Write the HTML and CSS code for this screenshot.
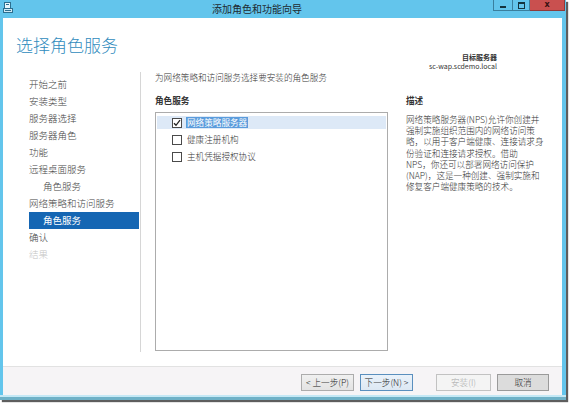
FILE: index.html
```html
<!DOCTYPE html>
<html lang="zh-CN">
<head>
<meta charset="utf-8">
<title>添加角色和功能向导</title>
<link rel="stylesheet" href="styles.css">
</head>
<body>
<div class="window">
  <div class="titlebar">
    <svg class="appicon" width="10" height="11" viewBox="0 0 10 11">
      <rect x="1.5" y="0.5" width="6" height="6" fill="#e8f6fc" stroke="#2d6f8f" stroke-width="1"/>
      <rect x="3" y="2" width="3" height="1" fill="#2d6f8f"/>
      <rect x="0.5" y="6.5" width="9" height="4" fill="#cfe9f5" stroke="#2d6f8f" stroke-width="1"/>
      <rect x="2" y="8" width="6" height="1" fill="#2d6f8f"/>
    </svg>
    <div class="title">添加角色和功能向导</div>
    <div class="caption">
      <div class="cbtn min"><span class="minbar"></span></div>
      <div class="cbtn max"><span class="maxbox"></span></div>
      <div class="cbtn close">x</div>
    </div>
  </div>
  <div class="client">
    <div class="header">
      <h1 class="heading">选择角色服务</h1>
      <div class="target">
        <div class="target-label">目标服务器</div>
        <div class="target-name">sc-wap.scdemo.local</div>
      </div>
    </div>
    <div class="main">
      <nav class="nav">
        <div class="nav-item">开始之前</div>
        <div class="nav-item">安装类型</div>
        <div class="nav-item">服务器选择</div>
        <div class="nav-item">服务器角色</div>
        <div class="nav-item">功能</div>
        <div class="nav-item">远程桌面服务</div>
        <div class="nav-item sub">角色服务</div>
        <div class="nav-item">网络策略和访问服务</div>
        <div class="nav-item sub active">角色服务</div>
        <div class="nav-item">确认</div>
        <div class="nav-item disabled">结果</div>
      </nav>
      <div class="separator"></div>
      <div class="content">
        <p class="intro">为网络策略和访问服务选择要安装的角色服务</p>
        <div class="cols">
          <div class="roles">
            <div class="label">角色服务</div>
            <div class="listbox">
              <div class="row selected">
                <span class="check checked"><svg width="8" height="8" viewBox="0 0 8 8"><path d="M1 4.2 L3 6.3 L7 1.2" fill="none" stroke="#222" stroke-width="1.3"/></svg></span>
                <span class="row-text hl">网络策略服务器</span>
              </div>
              <div class="row">
                <span class="check"></span>
                <span class="row-text">健康注册机构</span>
              </div>
              <div class="row">
                <span class="check"></span>
                <span class="row-text">主机凭据授权协议</span>
              </div>
            </div>
          </div>
          <div class="desc">
            <div class="label">描述</div>
            <p class="desc-text">网络策略服务器(NPS)允许你创建并<br>强制实施组织范围内的网络访问策<br>略，以用于客户端健康、连接请求身<br>份验证和连接请求授权。借助<br>NPS，你还可以部署网络访问保护<br>(NAP)，这是一种创建、强制实施和<br>修复客户端健康策略的技术。</p>
          </div>
        </div>
      </div>
    </div>
    <div class="footer">
      <button class="btn prev">&lt; 上一步(P)</button>
      <button class="btn next">下一步(N) &gt;</button>
      <button class="btn install" disabled>安装(I)</button>
      <button class="btn cancel">取消</button>
    </div>
  </div>
</div>
</body>
</html>
```
FILE: styles.css
```css
html, body {
  margin: 0;
  padding: 0;
  background: #ffffff;
}
body {
  width: 571px;
  height: 404px;
  overflow: hidden;
  font-family: "Noto Sans CJK SC", "Liberation Sans", sans-serif;
  color: #333;
}
.window {
  width: 566px;
  height: 400px;
  display: flex;
  flex-direction: column;
  background: linear-gradient(to bottom, #63c5ec 0, #63c5ec 395px, #c4e8f5 395px, #c4e8f5 397px, #6fb1c7 397px);
  box-shadow: 2px 2px 1px rgba(40, 40, 40, 0.75);
}
.titlebar {
  height: 18px;
  display: flex;
  align-items: flex-start;
  flex: none;
}
.appicon {
  margin: 2px 0 0 3px;
  flex: none;
}
.title {
  flex: 1;
  text-align: center;
  font-size: 10px;
  line-height: 17px;
  color: #1e2a30;
  padding-left: 8px;
}
.caption {
  display: flex;
  flex: none;
  margin-right: 1px;
}
.cbtn {
  height: 11px;
  box-sizing: border-box;
  border: 1px solid #3a7f9e;
  border-top: none;
  display: flex;
  align-items: center;
  justify-content: center;
}
.min { width: 20px; }
.max { width: 17px; border-left: none; }
.close {
  width: 35px;
  border-left: none;
  background: #c9504f;
  border-color: #8e3a3a;
  color: #3a1212;
  font-family: "DejaVu Sans", sans-serif;
  font-weight: bold;
  font-size: 8px;
  line-height: 10px;
}
.minbar {
  width: 6px;
  height: 2px;
  background: #14343f;
  margin-top: 4px;
}
.maxbox {
  width: 5px;
  height: 4px;
  border: 1px solid #14343f;
  border-top-width: 2px;
}
.client {
  flex: 1;
  margin: 0 4px 5px 3px;
  background: #ffffff;
  display: flex;
  flex-direction: column;
}
.header {
  height: 48px;
  flex: none;
  display: flex;
  justify-content: space-between;
  align-items: flex-start;
  padding: 0 65px 0 13px;
}
.heading {
  margin: 17px 0 0 0;
  font-size: 17px;
  line-height: 20px;
  font-weight: 300;
  color: #2f8bbd;
}
.target {
  margin-top: 35px;
  text-align: right;
  font-size: 7px;
  line-height: 9px;
  color: #333;
}
.target-label {
  font-weight: bold;
}
.main {
  height: 300px;
  flex: none;
  display: flex;
  align-items: flex-start;
}
.nav {
  width: 110px;
  padding: 10px 1px 0 26px;
  flex: none;
}
.nav-item {
  height: 17px;
  line-height: 17px;
  font-size: 9.5px;
  font-weight: 300;
  color: #444;
  white-space: nowrap;
}
.nav-item.sub {
  padding-left: 14px;
}
.nav-item.active {
  background: #1566b3;
  color: #ffffff;
  font-weight: 400;
}
.nav-item.disabled {
  color: #c4c4c4;
}
.separator {
  width: 1px;
  height: 280px;
  margin-top: 6px;
  background: #d6d6d6;
  flex: none;
}
.content {
  margin-left: 14px;
  flex: 1;
}
.intro {
  margin: 6px 0 0 0;
  font-size: 8.6px;
  line-height: 11px;
  font-weight: 300;
  color: #333;
}
.cols {
  display: flex;
  align-items: flex-start;
  margin-top: 12px;
}
.roles {
  width: 233px;
  flex: none;
}
.label {
  font-size: 8.6px;
  line-height: 11px;
  font-weight: bold;
  color: #333;
}
.listbox {
  margin-top: 6px;
  height: 239px;
  box-sizing: border-box;
  border: 1px solid #acacac;
  padding: 3px 1px 0 1px;
}
.row {
  height: 13px;
  margin-bottom: 4px;
  display: flex;
  align-items: center;
}
.row.selected {
  background: #dde9f7;
}
.check {
  width: 10px;
  height: 10px;
  box-sizing: border-box;
  border: 1px solid #4a4a4a;
  background: #fff;
  margin-left: 15px;
  margin-right: 5px;
  display: flex;
  align-items: center;
  justify-content: center;
  flex: none;
}
.row-text {
  font-size: 8.6px;
  line-height: 11px;
  font-weight: 300;
  color: #333;
}
.row-text.hl {
  background: #5b9cdc;
  color: #ffffff;
  padding: 0 1px;
  margin-left: -1px;
  font-weight: 400;
}
.desc {
  margin-left: 18px;
  flex: none;
}
.desc-text {
  margin: 8px 0 0 0;
  font-size: 8.6px;
  line-height: 11.2px;
  font-weight: 300;
  color: #333;
  white-space: nowrap;
}
.footer {
  flex: 1;
  border-top: 1px solid #e2e2e2;
  background: #f6f4f6;
  display: flex;
  justify-content: flex-end;
  align-items: flex-start;
  padding: 7px 13px 0 0;
}
.btn {
  height: 17px;
  width: 53px;
  box-sizing: border-box;
  padding: 0;
  margin: 0 0 0 6px;
  font-family: "Noto Sans CJK SC", "Liberation Sans", sans-serif;
  font-size: 8.6px;
  font-weight: 300;
  line-height: 15px;
  color: #222;
  border: 1px solid #acacac;
  background: linear-gradient(#f0f0f0, #e3e3e3);
  border-radius: 0;
}
.btn.next {
  border-color: #5a8fbe;
  background: linear-gradient(#eaf2fa, #dde8f3);
}
.btn.install {
  width: 55px;
  margin-left: 23px;
  background: #f4f4f4;
  border-color: #c2c2c2;
  color: #a8a8a8;
}
.btn.cancel {
  width: 52px;
  background: #dcdcdc;
  border-color: #9a9a9a;
}
```
